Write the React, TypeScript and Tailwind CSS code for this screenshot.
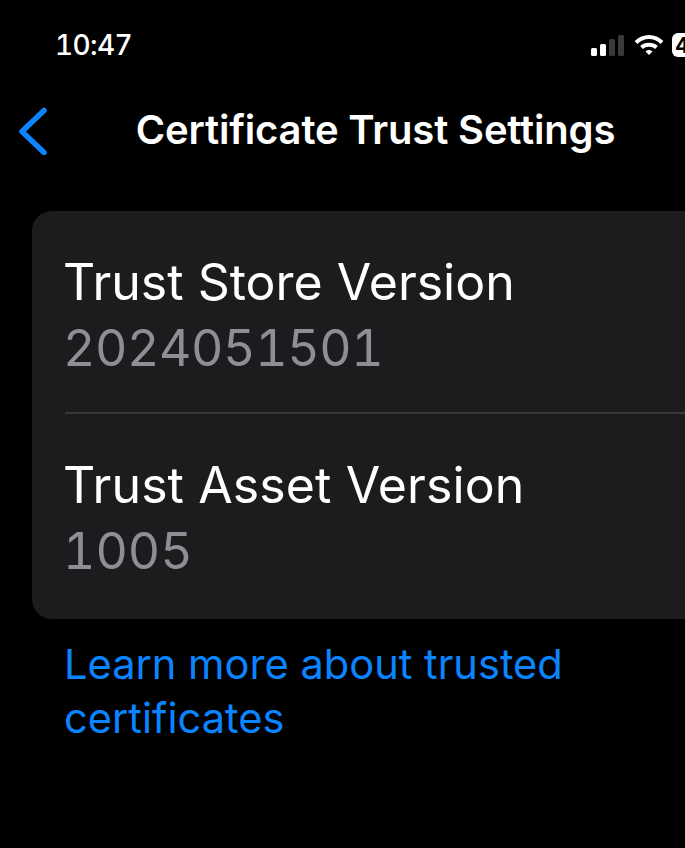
export default function App() {
  return (
    <div className="h-[848px] w-[685px] overflow-hidden bg-black text-white font-['Inter',sans-serif]">
      {/* status bar */}
      <div className="flex h-[90px] items-start justify-between pl-[55px] pt-[27px]">
        <span className="text-[28px] font-medium leading-[36px] tracking-[-0.6px] tabular-nums">10:47</span>
        <div className="mr-[-27px] flex items-center gap-[8px] pt-[6px]">
          <svg width="36" height="22" viewBox="0 0 36 22">
            <rect x="1" y="14" width="6" height="8" rx="1.5" fill="#fff" />
            <rect x="10" y="10" width="6" height="12" rx="1.5" fill="#fff" />
            <rect x="19" y="5" width="6" height="17" rx="1.5" fill="#3a3a3c" />
            <rect x="28" y="1" width="6" height="21" rx="1.5" fill="#3a3a3c" />
          </svg>
          <svg width="30" height="22" viewBox="0 0 30 22" fill="none" stroke="#fff" strokeWidth="4">
            <path d="M2 8.5C9.5 1 20.500 1 28 8.500" />
            <path d="M7.500 13.500C11.500 9.800 18.500 9.800 22.500 13.500" />
            <path d="M11.500 17.500L15 21L18.500 17.500C16.500 15.500 13.500 15.500 11.500 17.500Z" fill="#fff" stroke="none" />
          </svg>
          <div className="flex h-[24px] w-[40px] shrink-0 items-center rounded-l-[6px] bg-white pl-[3px] text-[21px] font-bold leading-none text-black">
            4
          </div>
        </div>
      </div>

      {/* nav bar */}
      <div className="relative flex h-[80px] items-center justify-center pl-[66px]">
        <svg className="absolute left-[18px] top-[17px]" width="30" height="48" viewBox="0 0 30 48" fill="none" stroke="#0a84ff" strokeWidth="5.500" strokeLinecap="round" strokeLinejoin="round">
          <path d="M26 3.500L4 24.500L26 45.500" />
        </svg>
        <h1 className="whitespace-nowrap text-[40px] font-semibold leading-[48px] tracking-[-0.17px]">Certificate Trust Settings</h1>
      </div>

      {/* version card */}
      <div className="ml-[32px] mt-[41px] h-[408px] w-[700px] rounded-l-[20px] bg-[#1c1c1e] pl-[33px]">
        <div className="h-[203px] border-b-2 border-[#38383a] pt-[39px]">
          <div className="-ml-[2px] text-[50px] leading-[64px]">Trust Store Version</div>
          <div className="-ml-[2px] mt-[2px] text-[50px] leading-[64px] tracking-[-0.4px] tabular-nums text-[#8e8e93]">2024051501</div>
        </div>
        <div className="pt-[39px]">
          <div className="-ml-[2px] text-[50px] leading-[64px] tracking-[0.1px]">Trust Asset Version</div>
          <div className="-ml-[2px] mt-[2px] text-[50px] leading-[64px] tabular-nums text-[#8e8e93]">1005</div>
        </div>
      </div>

      {/* link */}
      <div className="w-[600px] pl-[64px] pt-[18px] text-[41.6px] leading-[54px] text-[#0a84ff]">
        Learn more about trusted certificates
      </div>
    </div>
  );
}
